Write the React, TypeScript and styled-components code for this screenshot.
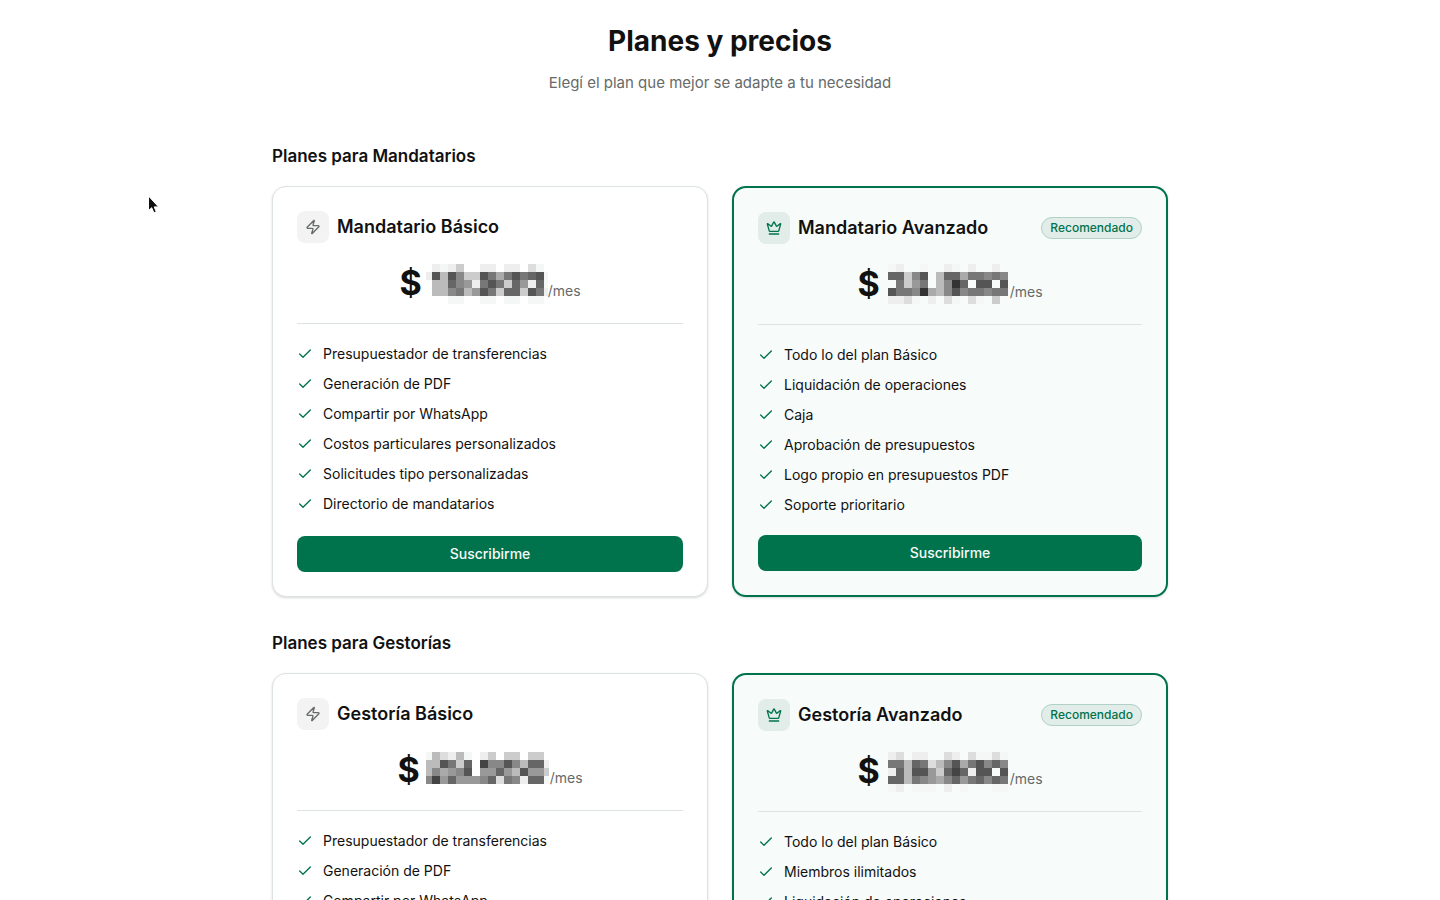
import React from "react";
import styled, { createGlobalStyle } from "styled-components";
import { Check, Crown, Zap } from "lucide-react";

const GlobalStyle = createGlobalStyle`
  *, *::before, *::after { box-sizing: border-box; }
  body {
    margin: 0;
    background: #ffffff;
    color: #111111;
    font-family: Inter, "Liberation Sans", sans-serif;
    font-size: 14px;
    line-height: 20px;
  }
  h1, h2, h3, p, ul { margin: 0; padding: 0; }
`;

const Page = styled.main`
  max-width: 944px;
  margin: 0 auto;
  padding: 23px 24px 48px;
`;

const PageHeader = styled.header`
  display: flex;
  flex-direction: column;
  gap: 12px;
  margin-bottom: 47px;
  text-align: center;
`;

const PageTitle = styled.h1`
  font-size: 28px;
  line-height: 36px;
  font-weight: 700;
`;

const Subtitle = styled.p`
  font-size: 15px;
  line-height: 24px;
  color: #666a68;
`;

const Sections = styled.div`
  display: flex;
  flex-direction: column;
  gap: 32px;
`;

const Section = styled.section`
  display: flex;
  flex-direction: column;
  gap: 16px;
`;

const SectionTitle = styled.h2`
  font-size: 17px;
  line-height: 28px;
  font-weight: 600;
`;

const PlanGrid = styled.div`
  display: grid;
  grid-template-columns: repeat(2, minmax(0, 1fr));
  gap: 24px;

  @media (max-width: 720px) {
    grid-template-columns: 1fr;
  }
`;

const Card = styled.article<{ $featured: boolean }>`
  display: flex;
  flex-direction: column;
  gap: 20px;
  padding: 24px;
  border: ${(p) => (p.$featured ? "2px solid #00734c" : "1px solid #dce3e0")};
  border-radius: 14px;
  background: ${(p) => (p.$featured ? "#f7fbfa" : "#ffffff")};
  box-shadow: 0 1px 3px rgba(0, 0, 0, 0.1), 0 1px 2px rgba(0, 0, 0, 0.06);
`;

const CardHeader = styled.div`
  display: flex;
  align-items: center;
  gap: 8px;
`;

const IconTile = styled.span<{ $featured: boolean }>`
  display: flex;
  align-items: center;
  justify-content: center;
  flex: none;
  width: 32px;
  height: 32px;
  border-radius: 8px;
  color: ${(p) => (p.$featured ? "#00734c" : "#666a68")};
  background: ${(p) => (p.$featured ? "#e2ece8" : "#f3f3f3")};
`;

const CardTitle = styled.h3`
  font-size: 18px;
  line-height: 28px;
  font-weight: 600;
`;

const Badge = styled.span`
  margin-left: auto;
  padding: 2px 8px;
  border: 1px solid #b0d2c6;
  border-radius: 11px;
  background: #e2ece8;
  color: #00734c;
  font-size: 12px;
  line-height: 16px;
  font-weight: 500;
`;

const Price = styled.p`
  display: flex;
  align-items: flex-end;
  justify-content: center;
  height: 40px;
`;

const Currency = styled.span`
  margin-right: 4px;
  font-size: 34px;
  line-height: 40px;
  font-weight: 700;
`;

const Mosaic = styled.svg`
  display: block;
  height: 40px;
  overflow: visible;
`;

const Period = styled.span`
  padding-bottom: 2px;
  color: #666a68;
`;

const Divider = styled.hr`
  width: 100%;
  height: 1px;
  margin: 0;
  border: 0;
  background: #dce3e0;
`;

const Features = styled.ul`
  display: flex;
  flex-direction: column;
  gap: 10px;
  list-style: none;
`;

const Feature = styled.li`
  display: flex;
  align-items: center;
  gap: 10px;

  svg {
    flex: none;
    color: #00734c;
  }
`;

const SubscribeButton = styled.button`
  width: 100%;
  height: 36px;
  margin-top: auto;
  border: 0;
  border-radius: 8px;
  background: #00734c;
  color: #f5faf8;
  font: inherit;
  font-weight: 500;
  cursor: pointer;
`;

const Pointer = styled.svg`
  position: absolute;
  top: 195px;
  left: 147px;
  pointer-events: none;
`;

// The covered amount: grey levels of 8px cells, one character each, a dot for
// an empty cell. `start` and `end` clip the first and last columns.
type Amount = {
  width: number;
  start: number;
  end: number;
  shiftX: number;
  shiftY: number;
  rows: string[];
};

type Plan = {
  name: string;
  featured: boolean;
  amount: Amount;
  features: string[];
};

const groups: { title: string; plans: Plan[] }[] = [
  {
    title: "Planes para Mandatarios",
    plans: [
      {
        name: "Mandatario Básico",
        featured: false,
        amount: {
          width: 122,
          start: 0,
          end: 122,
          shiftX: -2,
          shiftY: 1,
          rows: [
            ".efec..ee.ee.df.",
            "e5b58cc57a75765f",
            ".bb689e757c69e6f",
            ".bb87b957c66c57e",
            "...ff..ff.ff.ff.",
          ],
        },
        features: [
          "Presupuestador de transferencias",
          "Generación de PDF",
          "Compartir por WhatsApp",
          "Costos particulares personalizados",
          "Solicitudes tipo personalizadas",
          "Directorio de mandatarios",
        ],
      },
      {
        name: "Mandatario Avanzado",
        featured: true,
        amount: {
          width: 126,
          start: 4,
          end: 124,
          shiftX: 4,
          shiftY: 0,
          rows: [
            "fe..f..ef.e..e.",
            "66c85.b66a77878",
            ".7c97.b836.55.5",
            "57783ab85877877",
            "eedf.e.df.df.c.",
          ],
        },
        features: [
          "Todo lo del plan Básico",
          "Liquidación de operaciones",
          "Caja",
          "Aprobación de presupuestos",
          "Logo propio en presupuestos PDF",
          "Soporte prioritario",
        ],
      },
    ],
  },
  {
    title: "Planes para Gestorías",
    plans: [
      {
        name: "Gestoría Básico",
        featured: false,
        amount: {
          width: 126,
          start: 2,
          end: 125,
          shiftX: 0,
          shiftY: 2,
          rows: [
            "fbdebf.ec.cc.cc.",
            "bb57c6.48858b66e",
            "b8a985.9969b599c",
            "849699986d78e66f",
          ],
        },
        features: [
          "Presupuestador de transferencias",
          "Generación de PDF",
          "Compartir por WhatsApp",
          "Costos particulares personalizados",
          "Solicitudes tipo personalizadas",
          "Directorio de mandatarios",
        ],
      },
      {
        name: "Gestoría Avanzado",
        featured: true,
        amount: {
          width: 126,
          start: 4,
          end: 124,
          shiftX: 4,
          shiftY: 1,
          rows: [
            "ed.ee..de.dffdf",
            "77b67db85a75868",
            "e6b559c646e55.5",
            "66b789a86976867",
            "fe.fff.e.f...ff",
          ],
        },
        features: [
          "Todo lo del plan Básico",
          "Miembros ilimitados",
          "Liquidación de operaciones",
          "Caja",
          "Aprobación de presupuestos",
          "Soporte prioritario",
        ],
      },
    ],
  },
];

function HiddenAmount({ amount }: { amount: Amount }) {
  const { width, start, end, shiftX, shiftY, rows } = amount;
  return (
    <Mosaic
      width={width}
      viewBox={`0 0 ${width} 40`}
      shapeRendering="crispEdges"
      aria-hidden="true"
    >
      {rows.flatMap((row, y) =>
        row.split("").map((level, x) => {
          if (level === ".") return null;
          const left = Math.max(start, x * 8 + shiftX);
          const right = Math.min(end, x * 8 + shiftX + 8);
          return (
            <rect
              key={`${x}-${y}`}
              x={left}
              y={y * 8 + shiftY}
              width={right - left}
              height={8}
              fill={level === "f" ? "#f5f6f6" : `#${level}${level}${level}`}
            />
          );
        })
      )}
    </Mosaic>
  );
}

function PlanCard({ plan }: { plan: Plan }) {
  const Icon = plan.featured ? Crown : Zap;
  return (
    <Card $featured={plan.featured}>
      <CardHeader>
        <IconTile $featured={plan.featured}>
          <Icon size={16} />
        </IconTile>
        <CardTitle>{plan.name}</CardTitle>
        {plan.featured && <Badge>Recomendado</Badge>}
      </CardHeader>
      <Price>
        <Currency>$</Currency>
        <HiddenAmount amount={plan.amount} />
        <Period>/mes</Period>
      </Price>
      <Divider />
      <Features>
        {plan.features.map((text) => (
          <Feature key={text}>
            <Check size={16} />
            {text}
          </Feature>
        ))}
      </Features>
      <SubscribeButton type="button">Suscribirme</SubscribeButton>
    </Card>
  );
}

export default function App() {
  return (
    <>
      <GlobalStyle />
      <Page>
        <PageHeader>
          <PageTitle>Planes y precios</PageTitle>
          <Subtitle>Elegí el plan que mejor se adapte a tu necesidad</Subtitle>
        </PageHeader>
        <Sections>
          {groups.map((group) => (
            <Section key={group.title}>
              <SectionTitle>{group.title}</SectionTitle>
              <PlanGrid>
                {group.plans.map((plan) => (
                  <PlanCard key={plan.name} plan={plan} />
                ))}
              </PlanGrid>
            </Section>
          ))}
        </Sections>
      </Page>
      <Pointer width="14" height="20" viewBox="0 0 14 20" aria-hidden="true">
        <path
          d="M1.5 1v14.6l3.2-2.9 2.2 5 2.4-1-2.1-4.8h4.3z"
          fill="#111111"
          stroke="#ffffff"
          strokeWidth="1"
        />
      </Pointer>
    </>
  );
}
